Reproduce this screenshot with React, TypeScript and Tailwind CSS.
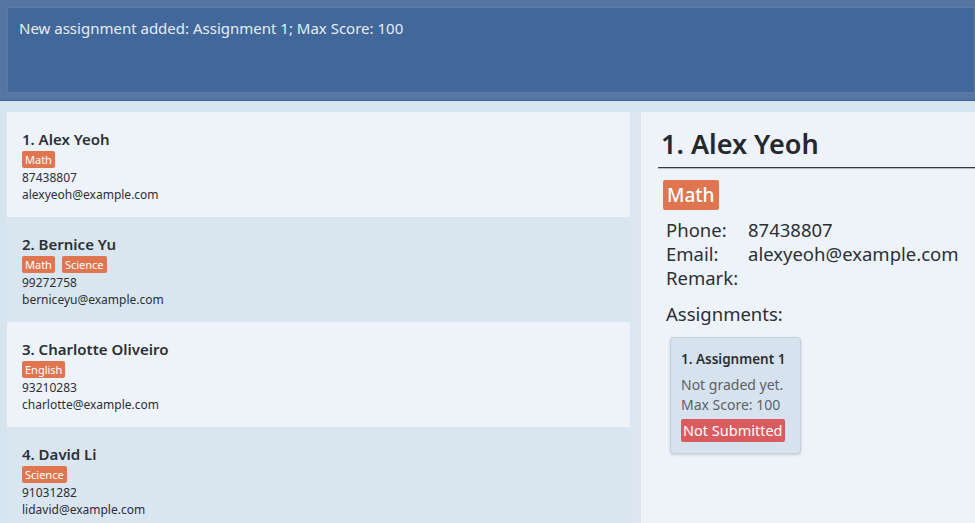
const persons = [
  { name: "1. Alex Yeoh", tags: ["Math"], phone: "87438807", email: "alexyeoh@example.com" },
  { name: "2. Bernice Yu", tags: ["Math", "Science"], phone: "99272758", email: "berniceyu@example.com" },
  { name: "3. Charlotte Oliveiro", tags: ["English"], phone: "93210283", email: "charlotte@example.com" },
  { name: "4. David Li", tags: ["Science"], phone: "91031282", email: "lidavid@example.com" },
];

function PersonCard({ p, i }: { p: (typeof persons)[number]; i: number }) {
  return (
    <div className={`h-[105px] shrink-0 pl-[15px] pt-[17px] ${i % 2 === 0 ? "bg-[#eef3f9]" : "bg-[#d9e5ef]"}`}>
      <div className="text-[15px] leading-[20px] font-semibold text-[#2b2f36]">{p.name}</div>
      <div className="flex gap-[7px] mt-[2px]">
        {p.tags.map((t) => (
          <span key={t} className="bg-[#df7650] text-white text-[11px] leading-[17px] px-[3px] rounded-[2px]">
            {t}
          </span>
        ))}
      </div>
      <div className="text-[12px] leading-[17px] text-[#2b2f36] mt-[1px]">{p.phone}</div>
      <div className="text-[12px] leading-[17px] text-[#2b2f36]">{p.email}</div>
    </div>
  );
}

export default function App() {
  return (
    <div
      className="w-[975px] h-[523px] overflow-hidden flex flex-col bg-[#d6e4ef]"
      style={{ fontFamily: '"Noto Sans", "Open Sans", sans-serif' }}
    >
      {/* Result display */}
      <div className="h-[101px] shrink-0 bg-[#5576a2] pt-[7px] pl-[7px] pb-[7px] border-b border-[#3f6494]">
        <div className="h-full bg-[#42679a] border border-[#5a7ba6] px-[11px] pt-[9px] text-[15px] text-[#e6edf6]">
          New assignment added: Assignment 1; Max Score: 100
        </div>
      </div>

      <div className="flex flex-1 min-h-0 pt-[11px]">
        {/* Person list */}
        <div className="w-[623px] ml-[7px] flex flex-col overflow-hidden">
          {persons.map((p, i) => (
            <PersonCard key={p.name} p={p} i={i} />
          ))}
        </div>

        <div className="w-[11px] bg-[#dbe6f0]" />

        {/* Detail panel */}
        <div className="flex-1 bg-[#eef3f9] border-l border-[#f3f7fb] pt-[15px]">
          <div className="pl-[19px] text-[27px] leading-[34px] font-semibold text-[#25282d]">1. Alex Yeoh</div>
          <div className="ml-[16px] mt-[6px] h-[2px] bg-[#3a3a3a] border-b border-[#b8bcc2]" />
          <div className="pl-[21px] mt-[11px]">
            <span className="inline-block bg-[#df7650] text-white text-[19px] leading-[30px] px-[4px] rounded-[2px] font-medium">
              Math
            </span>
          </div>
          <div className="pl-[24px] mt-[8px] text-[18.5px] leading-[24px] text-[#2b2f36]">
            <div className="flex">
              <span className="w-[82px]">Phone:</span>
              <span>87438807</span>
            </div>
            <div className="flex">
              <span className="w-[82px]">Email:</span>
              <span>alexyeoh@example.com</span>
            </div>
            <div>Remark:</div>
            <div className="mt-[12px]">Assignments:</div>
          </div>
          <div className="ml-[28px] mt-[11px] w-[131px] h-[117px] rounded-[4px] bg-[#d6e3ee] border border-[#c5cfd9] shadow-[0_1px_3px_rgba(0,0,0,0.15)] px-[10px] pt-[11px] whitespace-nowrap">
            <div className="text-[13.5px] leading-[20px] font-semibold text-[#2b2f36]">1. Assignment 1</div>
            <div className="mt-[6px] text-[14px] leading-[20px] text-[#5c6168]">Not graded yet.</div>
            <div className="text-[14px] leading-[20px] text-[#5c6168]">Max Score: 100</div>
            <span className="inline-block mt-[4px] bg-[#d95b5e] text-white text-[14.5px] leading-[23px] px-[2px] rounded-[2px]">
              Not Submitted
            </span>
          </div>
        </div>
      </div>
    </div>
  );
}
